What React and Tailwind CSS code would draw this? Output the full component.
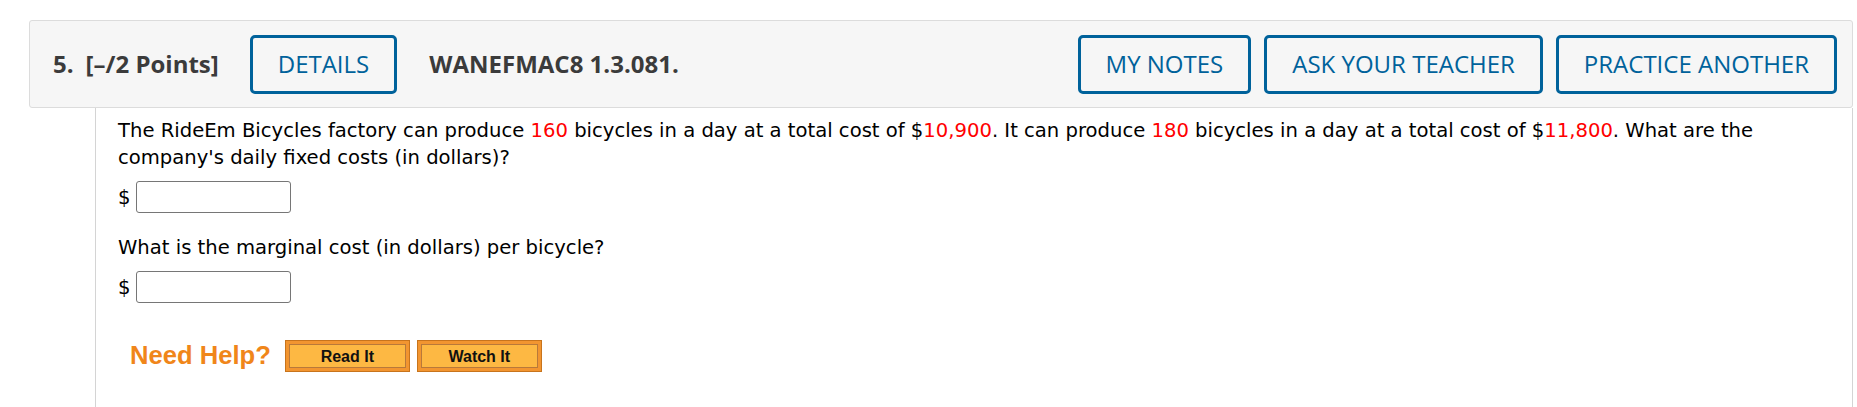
const headerButton =
  "h-[59px] px-[25px] border-[3px] border-[#00629b] rounded-[5px] text-[#00629b] text-[24px] leading-none bg-[#f6f6f6]";

const HelpButton = ({ label }) => (
  <button className="w-[125px] h-[32px] border border-[#c8741c] bg-[#f29530] p-[3px]">
    <span className="flex items-center justify-center w-full h-full border border-[#b9793a] bg-[#fdb843] text-[16px] font-bold text-[#111] font-['Liberation_Sans',Arial,sans-serif]">
      {label}
    </span>
  </button>
);

const AnswerBox = () => (
  <div className="flex items-center gap-[6px] h-[32px]">
    <span className="text-black">$</span>
    <input
      type="text"
      className="w-[155px] h-[32px] border border-[#767676] rounded-[3px] bg-white"
    />
  </div>
);

const Red = ({ children }) => <span className="text-[#ff0000]">{children}</span>;

export default function App() {
  return (
    <div className="min-h-[407px] bg-white pt-5 pl-[29px] pr-[4px] flex flex-col">

      {/* QUESTION HEADER */}

      <div className="flex items-center h-[88px] bg-[#f6f6f6] border border-[#dcdcdc] rounded-[3px] pl-[23px] pr-[15px] font-['Open_Sans',sans-serif] text-[#3b3b3b]">

        <span className="text-[24px] font-bold">5.</span>

        <span className="ml-[12px] text-[24px] font-bold">[–/2 Points]</span>

        <button className={`ml-[31px] ${headerButton}`}>DETAILS</button>

        <span className="ml-[32px] text-[24px] font-bold">WANEFMAC8 1.3.081.</span>

        <div className="ml-auto flex gap-[13px]">
          <button className={headerButton}>MY NOTES</button>
          <button className={headerButton}>ASK YOUR TEACHER</button>
          <button className={headerButton}>PRACTICE ANOTHER</button>
        </div>

      </div>

      {/* QUESTION BODY */}

      <div className="flex-1 ml-[66px] border-l border-r border-[#d4d4d4] pl-[22px] pt-[9px] font-['DejaVu_Sans',Verdana,sans-serif] text-[19.6px] leading-[27px] text-black">

        <p className="pr-[60px]">
          The RideEm Bicycles factory can produce <Red>160</Red> bicycles in a day at a total cost of $<Red>10,900</Red>. It can produce <Red>180</Red> bicycles in a day at a total cost of $<Red>11,800</Red>. What are the company's daily fixed costs (in dollars)?
        </p>

        <div className="mt-[10px]">
          <AnswerBox />
        </div>

        <p className="mt-[21px]">What is the marginal cost (in dollars) per bicycle?</p>

        <div className="mt-[10px]">
          <AnswerBox />
        </div>

        {/* NEED HELP */}

        <div className="mt-[37px] ml-[12px] flex items-center">
          <span className="text-[25.6px] font-bold text-[#f0861a] font-['Liberation_Sans',Arial,sans-serif] leading-none">
            Need Help?
          </span>
          <div className="ml-[14px] flex gap-[7px]">
            <HelpButton label="Read It" />
            <HelpButton label="Watch It" />
          </div>
        </div>

      </div>

    </div>
  );
}
